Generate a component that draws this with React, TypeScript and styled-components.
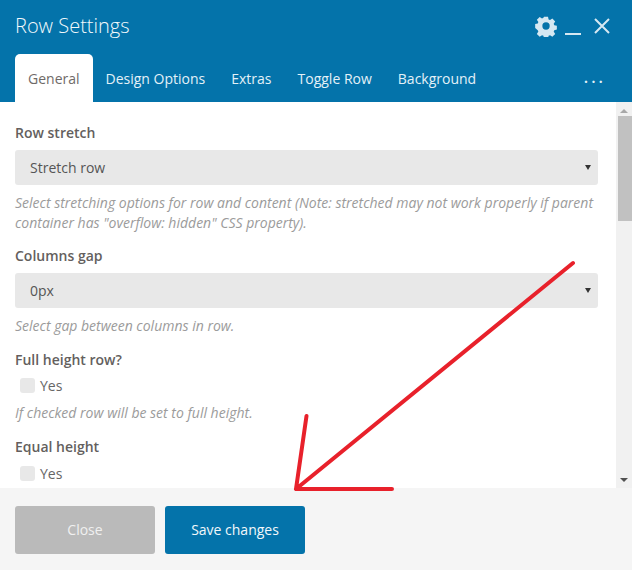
import React from 'react';
import styled, { createGlobalStyle } from 'styled-components';

const GlobalStyle = createGlobalStyle`
  html, body {
    margin: 0;
    padding: 0;
    background: #fff;
  }
  * {
    box-sizing: border-box;
  }
`;

const Modal = styled.div`
  position: relative;
  width: 632px;
  height: 570px;
  display: flex;
  flex-direction: column;
  overflow: hidden;
  font-family: 'Open Sans', 'Liberation Sans', sans-serif;
  font-size: 14px;
  color: #5f5a59;
`;

const Header = styled.div`
  height: 102px;
  flex: none;
  background: #0473aa;
  display: flex;
  flex-direction: column;
  padding: 0 15px;
`;

const TitleBar = styled.div`
  height: 54px;
  display: flex;
  align-items: center;
  justify-content: space-between;
  padding-bottom: 4px;
`;

const Title = styled.h1`
  margin: 0;
  font-size: 20px;
  font-weight: 300;
  color: #f2f9fc;
`;

const Controls = styled.div`
  display: flex;
  align-items: center;
  margin-right: 6px;
  margin-top: 2px;
  color: #d6e8f2;
`;

const MinimizeSlot = styled.span`
  display: flex;
  margin: 0 12px 0 8px;
`;

const Tabs = styled.div`
  display: flex;
  align-items: stretch;
  height: 48px;
`;

const Tab = styled.div<{ $active?: boolean }>`
  display: flex;
  align-items: center;
  padding: 0 13px;
  font-size: 14px;
  border-radius: 5px 5px 0 0;
  background: ${(p) => (p.$active ? '#fff' : 'transparent')};
  color: ${(p) => (p.$active ? '#6f6a68' : '#e3f1f8')};
`;

const More = styled.div`
  margin-left: auto;
  margin-right: 11px;
  display: flex;
  align-items: center;
  font-size: 16px;
  font-weight: 600;
  letter-spacing: 3px;
  color: #e3f1f8;
  padding-bottom: 2px;
`;

const Body = styled.div`
  height: 386px;
  flex: none;
  display: flex;
  background: #fff;
`;

const Content = styled.div`
  flex: 1;
  padding: 21px 18px 0 15px;
  overflow: hidden;
`;

const Field = styled.div<{ $gap?: number }>`
  margin-bottom: ${(p) => p.$gap ?? 14}px;
`;

const Label = styled.div<{ $gap?: number }>`
  font-size: 14px;
  font-weight: 600;
  line-height: 20px;
  margin-bottom: ${(p) => p.$gap ?? 7}px;
  color: #645f5e;
`;

const SelectBox = styled.div`
  height: 35px;
  display: flex;
  align-items: center;
  justify-content: space-between;
  padding: 0 7px 0 15px;
  background: #e8e8e8;
  border-radius: 3px;
  font-size: 14px;
  color: #555;
`;

const Caret = styled.span`
  width: 0;
  height: 0;
  border-left: 3px solid transparent;
  border-right: 3px solid transparent;
  border-top: 5px solid #333;
`;

const Hint = styled.div`
  margin-top: 8px;
  font-size: 14px;
  font-style: italic;
  line-height: 20px;
  color: #9b9b9b;
`;

const CheckRow = styled.div`
  display: flex;
  align-items: center;
  gap: 5px;
  padding-left: 5px;
  height: 20px;
  font-size: 14px;
  color: #666;
`;

const CheckBox = styled.span`
  width: 15px;
  height: 15px;
  background: #e8e8e8;
  border-radius: 3px;
`;

const Scrollbar = styled.div`
  width: 16px;
  flex: none;
  background: #f1f1f1;
  display: flex;
  flex-direction: column;
  align-items: center;
  justify-content: space-between;
  padding-top: 7px;
  padding-bottom: 6px;
`;

const ScrollTrack = styled.div`
  flex: 1;
  width: 100%;
  padding: 3px 0 0 2px;
`;

const ScrollThumb = styled.div`
  height: 105px;
  background: #c1c1c1;
`;

const ScrollArrow = styled.span<{ $up?: boolean }>`
  width: 0;
  height: 0;
  border-left: 4px solid transparent;
  border-right: 4px solid transparent;
  border-bottom: ${(p) => (p.$up ? '4px solid #a8a8a8' : 'none')};
  border-top: ${(p) => (p.$up ? 'none' : '4px solid #505050')};
`;

const Footer = styled.div`
  flex: 1;
  background: #f5f5f5;
  display: flex;
  gap: 10px;
  padding: 18px 15px 0;
`;

const Button = styled.button<{ $primary?: boolean }>`
  width: 140px;
  height: 48px;
  border: none;
  border-radius: 3px;
  padding: 0 0 2px;
  font-family: inherit;
  font-size: 14px;
  background: ${(p) => (p.$primary ? '#0473aa' : '#bababa')};
  color: ${(p) => (p.$primary ? '#f2f8fb' : '#f0f0f0')};
`;

const Annotation = styled.svg`
  position: absolute;
  left: 0;
  top: 0;
  pointer-events: none;
`;

const Gear = () => (
  <svg width="22" height="22" viewBox="0 0 24 24" fill="currentColor">
    <path
      fillRule="evenodd"
      d="M9.6 1h4.8l.7 3.2 1.7.7 2.8-1.8 3.4 3.4-1.8 2.8.7 1.7 3.1.7v4.6l-3.1.7-.7 1.7 1.8 2.8-3.4 3.4-2.8-1.8-1.7.7-.7 3.1H9.6l-.7-3.1-1.7-.7-2.8 1.8-3.4-3.4 1.8-2.8-.7-1.7L-1 14.3V9.7l3.1-.7.7-1.7L1 4.5l3.4-3.4 2.8 1.8 1.7-.7zM12 7.6a4.4 4.4 0 1 0 0 8.8 4.4 4.4 0 0 0 0-8.8z"
      transform="translate(1.1 1.1) scale(.91)"
    />
  </svg>
);

const Minimize = () => (
  <svg width="16" height="22" viewBox="0 0 16 22" fill="none" stroke="currentColor" strokeWidth="2">
    <path d="M0 19h16" />
  </svg>
);

const Close = () => (
  <svg width="18" height="18" viewBox="0 0 18 18" fill="none" stroke="currentColor" strokeWidth="2">
    <path d="M2 2l14 14M16 2L2 16" />
  </svg>
);

const App: React.FC = () => (
  <Modal>
    <GlobalStyle />
    <Header>
      <TitleBar>
        <Title>Row Settings</Title>
        <Controls>
          <Gear />
          <MinimizeSlot>
            <Minimize />
          </MinimizeSlot>
          <Close />
        </Controls>
      </TitleBar>
      <Tabs>
        <Tab $active>General</Tab>
        <Tab>Design Options</Tab>
        <Tab>Extras</Tab>
        <Tab>Toggle Row</Tab>
        <Tab>Background</Tab>
        <More>...</More>
      </Tabs>
    </Header>
    <Body>
      <Content>
        <Field $gap={13}>
          <Label>Row stretch</Label>
          <SelectBox>
            Stretch row
            <Caret />
          </SelectBox>
          <Hint>
            Select stretching options for row and content (Note: stretched may not work properly if parent
            container has "overflow: hidden" CSS property).
          </Hint>
        </Field>
        <Field>
          <Label>Columns gap</Label>
          <SelectBox>
            0px
            <Caret />
          </SelectBox>
          <Hint>Select gap between columns in row.</Hint>
        </Field>
        <Field>
          <Label $gap={5}>Full height row?</Label>
          <CheckRow>
            <CheckBox />
            Yes
          </CheckRow>
          <Hint>If checked row will be set to full height.</Hint>
        </Field>
        <Field>
          <Label $gap={6}>Equal height</Label>
          <CheckRow>
            <CheckBox />
            Yes
          </CheckRow>
        </Field>
      </Content>
      <Scrollbar>
        <ScrollArrow $up />
        <ScrollTrack>
          <ScrollThumb />
        </ScrollTrack>
        <ScrollArrow />
      </Scrollbar>
    </Body>
    <Footer>
      <Button>Close</Button>
      <Button $primary>Save changes</Button>
    </Footer>
    <Annotation width="632" height="570" viewBox="0 0 632 570" fill="none" stroke="#e8212b" strokeWidth="4" strokeLinecap="round" strokeLinejoin="round">
      <path d="M573 263L296 489M306.500 416L296 489H392" />
    </Annotation>
  </Modal>
);

export default App;
